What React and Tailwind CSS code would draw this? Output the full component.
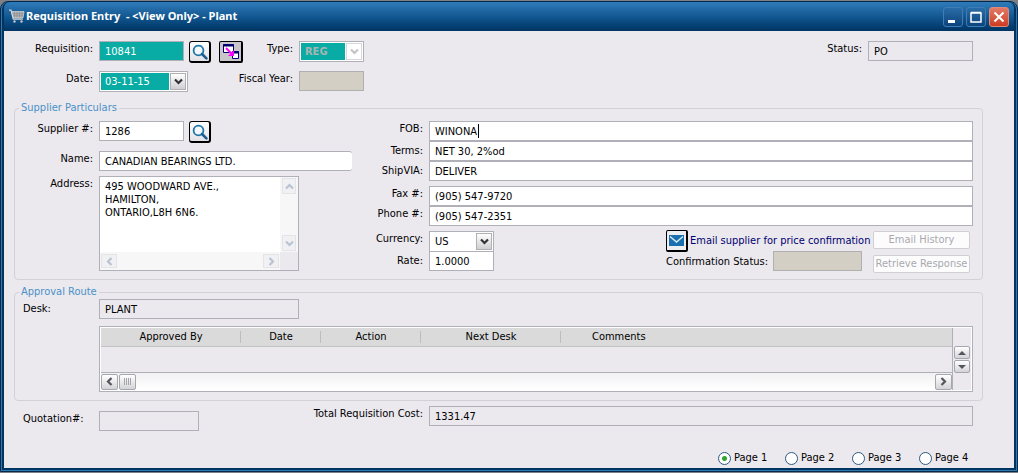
import React from "react";

const btn3d = "bg-gradient-to-b from-white to-[#d4d4d8] border border-[#a6a6ae] rounded-[2px] flex items-center justify-center shrink-0";
const field = "h-5 border border-[#b0b0b8] bg-white px-[5px] leading-[18px] text-black rounded-none outline-none min-w-0";
const readOnly = "h-5 border border-[#b0b0b8] bg-[#ebe8ee] px-[5px] leading-[18px] text-black rounded-none outline-none min-w-0";
const sandField = "h-5 border border-[#b0b0b0] bg-[#d3cfc5] rounded-none outline-none min-w-0";
const label = "leading-[16px] text-right whitespace-nowrap shrink-0";

function Chevron({ dir = "down", color = "#3c3c44" }) {
  const rotate = { down: "rotate-0", up: "rotate-180", left: "rotate-90", right: "-rotate-90" }[dir];
  return (
    <svg width="9" height="9" viewBox="0 0 9 9" className={rotate} aria-hidden="true">
      <path d="M1 2.5 4.5 6 8 2.5" fill="none" stroke={color} strokeWidth="2.2" />
    </svg>
  );
}

function SearchButton({ name }) {
  return (
    <button aria-label={name} className="w-[22px] h-[22px] rounded-[3px] border border-black border-r-2 border-b-2 bg-gradient-to-b from-white to-[#e2e2e6] flex items-center justify-center shrink-0">
      <svg width="16" height="16" viewBox="0 0 16 16" aria-hidden="true">
        <circle cx="6.5" cy="6.5" r="4.9" fill="#f2f8fc" stroke="#2273a9" strokeWidth="1.8" />
        <path d="M10 10l4.400 4.400" stroke="#1b5f98" strokeWidth="2.6" strokeLinecap="round" />
      </svg>
    </button>
  );
}

function Combo({ id, value, disabled, width, boxClass, textClass }) {
  return (
    <div className={"flex shrink-0 border border-[#b0b0b8] bg-white p-px h-[21px] " + width}>
      <select id={id} disabled={disabled} defaultValue={value} className={"flex-1 min-w-0 appearance-none pl-1 leading-4 outline-none opacity-100 " + boxClass + " " + textClass}>
        <option>{value}</option>
      </select>
      <span className={"pointer-events-none ml-px flex w-4 shrink-0 items-center justify-center border " + (disabled ? "border-[#d8d8dc] bg-white" : "border-[#b0b0b4] bg-gradient-to-b from-white to-[#cfcfd2]")}>
        <Chevron color={disabled ? "#c4c4c8" : "#303036"} />
      </span>
    </div>
  );
}

function Line({ id, text, value, labelClass = "", caret = false }) {
  return (
    <div className="flex items-start gap-[6px]">
      <label htmlFor={id} className={label + " w-[50px] " + labelClass}>{text}</label>
      <div className="relative flex min-w-0 flex-1">
        <input id={id} defaultValue={value} className={field + " flex-1"} />
        {caret && <span className="absolute left-[49px] top-[3px] h-[14px] w-px bg-black" />}
      </div>
    </div>
  );
}

function TitleBar() {
  return (
    <header className="flex h-[29px] items-center justify-between rounded-t-[6px] bg-gradient-to-b from-[#2f7cba] via-[#135892] to-[#003463] pl-[5px] pr-[5px]">
      <h1 className="flex items-center gap-px font-['Noto_Sans','DejaVu_Sans_Condensed',sans-serif] text-[11px] font-bold text-white">
        <svg width="16" height="15" viewBox="0 0 16 14" aria-hidden="true">
          <path d="M0 .6h2l2.300 9h9.500" fill="none" stroke="#d5d5d5" strokeWidth="1.2" />
          <path d="M2.500 2h12.500l-1 6.500H4.300z" fill="#b4b4b4" stroke="#dedede" strokeWidth=".7" />
          <path d="M5.500 2v6M8 2v6M10.500 2v6M13 2v6M3.500 4.200h11M4 6.300h10" stroke="#858a90" strokeWidth=".6" />
          <circle cx="5.500" cy="12" r="1.200" fill="#c8c8c8" />
          <circle cx="12.500" cy="12" r="1.200" fill="#c8c8c8" />
        </svg>
        <span className="whitespace-pre">{"Requisition Entry  - <View Only> - Plant"}</span>
      </h1>
      <div className="flex gap-[3px]">
        <button aria-label="Minimize" className="h-5 w-5 rounded-[3px] border border-[#3f7db4] bg-gradient-to-b from-[#2a6ca8] to-[#0b447c]">
          <svg width="18" height="18" viewBox="0 0 18 18"><path d="M4 13.500h7" stroke="#fff" strokeWidth="3" /></svg>
        </button>
        <button aria-label="Maximize" className="h-5 w-5 rounded-[3px] border border-[#3f7db4] bg-gradient-to-b from-[#2a6ca8] to-[#0b447c]">
          <svg width="18" height="18" viewBox="0 0 18 18"><path d="M4 5h10v9H4zM4 4.500h10" fill="none" stroke="#fff" strokeWidth="1.500" /></svg>
        </button>
        <button aria-label="Close" className="h-5 w-5 rounded-[3px] border border-[#e08a78] bg-gradient-to-b from-[#e07a66] to-[#cf3a1e]">
          <svg width="18" height="18" viewBox="0 0 18 18"><path d="M4.500 4.500l9 9M13.500 4.500l-9 9" stroke="#fff" strokeWidth="2" /></svg>
        </button>
      </div>
    </header>
  );
}

function SupplierParticulars() {
  return (
    <fieldset className="mt-[10px] min-w-0 rounded-[4px] border border-[#d3d1d8] pb-[6px] pr-[9px]">
      <legend className="ml-[4px] px-[2px] leading-[14px] text-[#4a92c8]">Supplier Particulars</legend>
      <div className="flex gap-[21px] pt-[6px]">
        <div className="flex w-[337px] shrink-0 flex-col">
          <div className="flex h-5 items-start gap-[6px]">
            <label htmlFor="supplier" className={label + " w-[78px]"}>Supplier #:</label>
            <div className="flex gap-[5px]">
              <input id="supplier" defaultValue="1286" className={field + " w-[85px]"} />
              <SearchButton name="Find supplier" />
            </div>
          </div>
          <div className="mt-[10px] flex items-start gap-[6px]">
            <label htmlFor="name" className={label + " w-[78px]"}>Name:</label>
            <input id="name" defaultValue="CANADIAN BEARINGS LTD." className={field + " flex-1 rounded-r-[3px] border-r-0"} />
          </div>
          <div className="mt-[5px] flex items-start gap-[6px]">
            <label htmlFor="address" className={label + " w-[78px]"}>Address:</label>
            <div className="grid w-[200px] grid-cols-[1fr_18px] border border-[#b0b0b8] bg-white">
              <textarea id="address" defaultValue={"495 WOODWARD AVE.,\nHAMILTON,\nONTARIO,L8H 6N6."} className="h-[75px] resize-none overflow-hidden px-[5px] py-[3px] leading-[13px] outline-none" />
              <div className="flex flex-col items-center justify-between bg-[#f7f7f8] p-px">
                <button aria-label="Scroll up" className="flex h-4 w-[14px] items-center justify-center border border-[#e4e4e8] bg-[#f1f1f4]"><Chevron dir="up" color="#b9c3d2" /></button>
                <button aria-label="Scroll down" className="flex h-4 w-[14px] items-center justify-center border border-[#e4e4e8] bg-[#f1f1f4]"><Chevron color="#b9c3d2" /></button>
              </div>
              <div className="flex h-[18px] items-center justify-between bg-[#f7f7f8] p-px">
                <button aria-label="Scroll left" className="flex h-[14px] w-4 items-center justify-center border border-[#e4e4e8] bg-[#f1f1f4]"><Chevron dir="left" color="#b9c3d2" /></button>
                <button aria-label="Scroll right" className="flex h-[14px] w-4 items-center justify-center border border-[#e4e4e8] bg-[#f1f1f4]"><Chevron dir="right" color="#b9c3d2" /></button>
              </div>
              <div className="bg-[#ebe8ee]" />
            </div>
          </div>
        </div>
        <div className="flex min-w-0 flex-1 flex-col">
          <Line id="fob" text="FOB:" value="WINONA" caret />
          <Line id="terms" text="Terms:" value="NET 30, 2%od" labelClass="pt-[2px]" />
          <Line id="shipvia" text="ShipVIA:" value="DELIVER" labelClass="pt-[2px]" />
          <div className="mt-[5px]">
            <Line id="fax" text="Fax #:" value="(905) 547-9720" />
            <Line id="phone" text="Phone #:" value="(905) 547-2351" />
          </div>
          <div className="mt-[5px] flex items-start justify-between">
            <div>
              <div className="flex h-5 gap-[6px]">
                <label htmlFor="currency" className={label + " w-[50px]"}>Currency:</label>
                <Combo id="currency" value="US" width="w-[65px]" boxClass="bg-white" textClass="text-black" />
              </div>
              <div className="flex h-5 gap-[6px]">
                <label htmlFor="rate" className={label + " w-[50px] pt-[2px]"}>Rate:</label>
                <input id="rate" defaultValue="1.0000" className={field + " w-[65px]"} />
              </div>
            </div>
            <div className="flex gap-[5px] pr-[3px]">
              <div className="w-[202px]">
                <div className="flex h-5 items-center gap-[2px]">
                  <button aria-label="Email supplier" className="flex h-[22px] w-[22px] shrink-0 items-center justify-center rounded-[2px] border border-r-2 border-b-2 border-black bg-[#eeeef2]">
                    <svg width="15" height="11" viewBox="0 0 15 11" aria-hidden="true">
                      <path d="M0 0h15v11H0z" fill="#1a6fae" />
                      <path d="M1 1.500l6.500 5.500L14 1.500" fill="none" stroke="#dcecf7" strokeWidth="1.400" />
                    </svg>
                  </button>
                  <span className="whitespace-nowrap text-[#00006e]">Email supplier for price confirmation</span>
                </div>
                <div className="flex items-start justify-between pr-[6px]">
                  <label htmlFor="confirmation" className={label + " pt-[3px]"}>Confirmation Status:</label>
                  <input id="confirmation" disabled className={sandField + " w-[89px]"} />
                </div>
              </div>
              <div className="flex w-[97px] flex-col gap-[6px]">
                <button disabled className="h-[18px] whitespace-nowrap rounded-[2px] border border-[#cfcfd4] bg-[#fcfcfd] text-[#a9a9ad]">Email History</button>
                <button disabled className="h-[18px] whitespace-nowrap rounded-[2px] border border-[#cfcfd4] bg-[#fcfcfd] text-[#a9a9ad]">Retrieve Response</button>
              </div>
            </div>
          </div>
        </div>
      </div>
    </fieldset>
  );
}

function ApprovalRoute() {
  const sep = "relative font-normal after:absolute after:right-0 after:top-[3px] after:h-3 after:w-px after:bg-[#bdbdc0]";
  return (
    <fieldset className="mt-[5px] min-w-0 rounded-[4px] border border-[#d3d1d8] pb-[8px] pl-[8px] pr-[9px]">
      <legend className="-ml-[4px] px-[2px] leading-[14px] text-[#4a92c8]">Approval Route</legend>
      <div className="flex items-start">
        <label htmlFor="desk" className="w-[76px] shrink-0 pt-[2px] leading-[16px]">Desk:</label>
        <input id="desk" readOnly defaultValue="PLANT" className={readOnly + " w-[200px]"} />
      </div>
      <div className="ml-[76px] mt-[7px] flex border border-[#b0b0b8] bg-white p-px outline-none">
        <div className="min-w-0 flex-1 border-r border-[#b0b0b8] bg-[#ebe8ee]">
          <table className="w-full table-fixed border-collapse">
            <thead>
              <tr className="h-[18px] border-b border-[#c3c3c6] bg-[#dadada] leading-[17px]">
                <th className={sep + " w-[140px]"}>Approved By</th>
                <th className={sep + " w-20"}>Date</th>
                <th className={sep + " w-[100px]"}>Action</th>
                <th className={sep + " w-[140px]"}>Next Desk</th>
                <th className="pl-[31px] text-left font-normal">Comments</th>
              </tr>
            </thead>
            <tbody>
              <tr className="h-[26px]"><td /><td /><td /><td /><td /></tr>
            </tbody>
          </table>
          <div className="flex h-[18px] items-center gap-px border-t border-[#b0b0b8] bg-gradient-to-b from-[#f1f1f3] to-white">
            <button aria-label="Scroll left" className={btn3d + " h-4 w-[17px]"}><Chevron dir="left" color="#55555c" /></button>
            <button aria-label="Scroll position" className={btn3d + " h-4 w-[17px] gap-px"}>
              <svg width="8" height="7" viewBox="0 0 8 7"><path d="M.5 0v7M2.500 0v7M4.500 0v7M6.500 0v7" stroke="#a4a4aa" /></svg>
            </button>
            <button aria-label="Scroll right" className={btn3d + " ml-auto h-4 w-[17px]"}><Chevron dir="right" color="#55555c" /></button>
          </div>
        </div>
        <div className="flex w-[18px] flex-col items-center gap-px bg-[#ebe8ee] pt-[18px]">
          <button aria-label="Scroll up" className={btn3d + " h-[13px] w-4"}><svg width="8" height="4" viewBox="0 0 8 4"><path d="M0 4l4-4 4 4z" fill="#55555c" /></svg></button>
          <button aria-label="Scroll down" className={btn3d + " h-[13px] w-4"}><svg width="8" height="4" viewBox="0 0 8 4"><path d="M0 0l4 4 4-4z" fill="#55555c" /></svg></button>
        </div>
      </div>
    </fieldset>
  );
}

export default function App() {
  return (
    <div className="flex min-h-screen flex-col bg-[#7d8086] pt-px pb-px font-['DejaVu_Sans_Condensed','DejaVu_Sans',sans-serif] text-[11px] text-black">
      <div className="flex flex-1 flex-col rounded-t-[8px] border border-[#04294a] bg-[#2f78b0] px-px pb-px">
        <div className="flex flex-1 flex-col rounded-t-[7px] bg-[#003463] px-[2px] pb-[2px]">
          <TitleBar />
          <main className="flex-1 bg-[#ebe8ee] pb-[2px] pl-[10px] pr-[31px] pt-[10px]">
            <div className="flex h-5 items-start pr-[10px]">
              <label htmlFor="requisition" className={label + " mr-[6px] w-[79px]"}>Requisition:</label>
              <input id="requisition" defaultValue="10841" className="h-5 w-[85px] border border-[#b0b0b8] bg-[#08aca4] px-[5px] text-white outline-none" />
              <div className="ml-[5px] flex gap-[8px]">
                <SearchButton name="Find requisition" />
                <button aria-label="Copy to new window" className="flex h-[22px] w-6 shrink-0 items-center justify-center rounded-[2px] border border-r-2 border-b-2 border-black bg-[#c9c5cb]">
                  <svg width="18" height="17" viewBox="0 0 18 17" className="shrink-0" aria-hidden="true">
                    <path d="M1.500 1.500h10v8h-10zM10.500 8.500h6v7h-6z" fill="#fff" stroke="#000070" />
                    <path d="M1 2.500h11M10 9.500h7" stroke="#000070" strokeWidth="2" />
                    <path d="M4 5l6 6" stroke="#f0f" strokeWidth="2" />
                    <path d="M12 7v6H6z" fill="#f0f" />
                  </svg>
                </button>
              </div>
              <label htmlFor="type" className={label + " mr-[6px] w-[50px]"}>Type:</label>
              <Combo id="type" value="REG" disabled width="w-[65px]" boxClass="bg-[#08aca4]" textClass="font-bold text-[#a9b5b3]" />
              <label htmlFor="status" className={label + " ml-auto mr-[6px]"}>Status:</label>
              <input id="status" readOnly defaultValue="PO" className={readOnly + " w-[105px]"} />
            </div>
            <div className="mt-[10px] flex h-5 items-start">
              <label htmlFor="date" className={label + " mr-[6px] w-[79px]"}>Date:</label>
              <Combo id="date" value="03-11-15" width="w-[89px]" boxClass="bg-[#08aca4]" textClass="text-white" />
              <label htmlFor="fiscal" className={label + " mr-[6px] w-[105px]"}>Fiscal Year:</label>
              <input id="fiscal" disabled className={sandField + " w-[65px]"} />
            </div>
            <SupplierParticulars />
            <ApprovalRoute />
            <div className="mt-[5px] flex items-start pl-[9px] pr-[10px]">
              <div className="flex pt-[5px]">
                <label htmlFor="quotation" className="w-[76px] leading-[16px]">Quotation#:</label>
                <input id="quotation" readOnly className={readOnly + " w-[100px]"} />
              </div>
              <label htmlFor="total" className={label + " mr-[6px] w-[224px]"}>Total Requisition Cost:</label>
              <input id="total" readOnly defaultValue="1331.47" className={readOnly + " flex-1"} />
            </div>
            <div className="mt-[19px] flex justify-end gap-[10px] pr-[7px]">
              {["Page 1", "Page 2", "Page 3", "Page 4"].map((page, i) => (
                <label key={page} className="flex h-4 w-[57px] items-center gap-[3px] whitespace-nowrap">
                  <input type="radio" name="page" defaultChecked={i === 0} className="h-[13px] w-[13px] shrink-0 appearance-none rounded-full border border-[#2d5a82] bg-white checked:bg-[radial-gradient(circle,#2fa52f_2px,#fff_3px)]" />
                  {page}
                </label>
              ))}
            </div>
          </main>
        </div>
      </div>
    </div>
  );
}
